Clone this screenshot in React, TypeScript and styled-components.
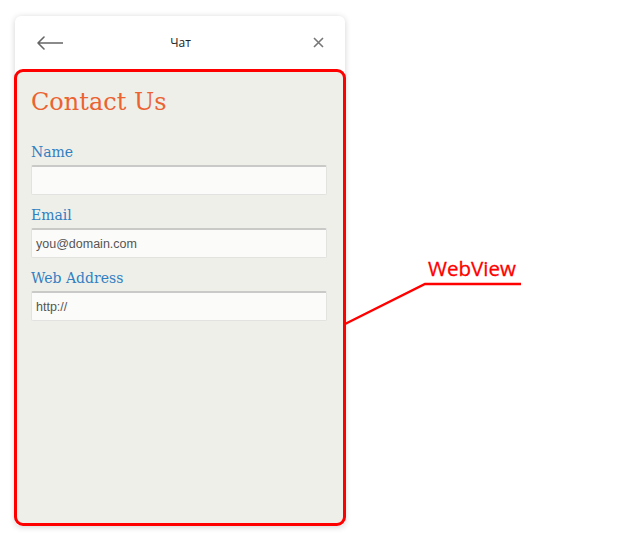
import React from "react";
import styled, { createGlobalStyle } from "styled-components";

const GlobalStyle = createGlobalStyle`
	html, body {
		margin: 0;
		padding: 0;
		background: #ffffff;
	}
`;

const Page = styled.div`
	position: relative;
	width: 640px;
	height: 540px;
	padding: 16px 0 0 15px;
	box-sizing: border-box;
`;

const Widget = styled.div`
	display: flex;
	flex-direction: column;
	width: 330px;
	height: 510px;
	background-color: #ffffff;
	border-radius: 6px;
	box-shadow: 0 1px 6px rgba(0, 0, 0, 0.18);
`;

const Header = styled.div`
	display: grid;
	grid-template-columns: 1fr auto 1fr;
	align-items: center;
	height: 53px;
	padding: 0 21px 0 22px;
	flex-shrink: 0;
`;

const HeaderTitle = styled.span`
	font-family: "Open Sans", "Noto Sans", sans-serif;
	font-size: 12px;
	color: #222222;
`;

const IconButton = styled.button<{ $end?: boolean }>`
	display: flex;
	align-items: center;
	justify-self: ${({ $end }) => ($end ? "end" : "start")};
	padding: 0;
	border: none;
	background: transparent;
`;

const WebViewFrame = styled.div`
	flex: 1;
	margin: 0 -1px;
	padding: 16px 16px 0 14px;
	border: 3px solid #ff0000;
	border-radius: 9px;
	background-color: #efefea;
`;

const Title = styled.h1`
	margin: 0 0 28px;
	font-family: "DejaVu Serif", serif;
	font-size: 24px;
	font-weight: 400;
	line-height: 28px;
	color: #ea6331;
`;

const Field = styled.div`
	display: flex;
	flex-direction: column;
	gap: 4px;
	margin-bottom: 12px;
`;

const Label = styled.label`
	font-family: "DejaVu Serif", serif;
	font-size: 14px;
	line-height: 17px;
	color: #2f80c2;
`;

const TextInput = styled.input`
	width: 100%;
	height: 30px;
	box-sizing: border-box;
	padding: 0 4px;
	border: 1px solid #e2e2e0;
	border-top: 2px solid #c9c9c7;
	border-radius: 2px;
	background-color: #fbfbf9;
	font-family: "Liberation Sans", Arial, sans-serif;
	font-size: 12.5px;
	color: #555555;
	outline: none;
`;

const Callout = styled.svg`
	position: absolute;
	left: 0;
	top: 0;
	pointer-events: none;
`;

const CalloutLabel = styled.span`
	position: absolute;
	left: 428px;
	top: 254px;
	font-family: "Open Sans", "Noto Sans", sans-serif;
	font-size: 20.5px;
	font-weight: 400;
	line-height: 28px;
	color: #ff0000;
	-webkit-text-stroke: 0.3px #ff0000;
`;

const fields = [
	{ label: "Name", value: "" },
	{ label: "Email", value: "you@domain.com" },
	{ label: "Web Address", value: "http://" },
];

export default function App() {
	return (
		<Page>
			<GlobalStyle />
			<Widget>
				<Header>
					<IconButton aria-label="back">
						<svg width="26" height="14" viewBox="0 0 26 14" fill="none">
							<path
								d="M25.5 7H1M7 1L1 7l6 6"
								stroke="#666"
								strokeWidth="1.6"
								strokeLinecap="round"
								strokeLinejoin="round"
							/>
						</svg>
					</IconButton>
					<HeaderTitle>Чат</HeaderTitle>
					<IconButton $end aria-label="close">
						<svg width="11" height="11" viewBox="0 0 11 11" fill="none">
							<path d="M1 1l9 9M10 1l-9 9" stroke="#777" strokeWidth="1.6" />
						</svg>
					</IconButton>
				</Header>
				<WebViewFrame>
					<Title>Contact Us</Title>
					{fields.map((f) => (
						<Field key={f.label}>
							<Label>{f.label}</Label>
							<TextInput defaultValue={f.value} />
						</Field>
					))}
				</WebViewFrame>
			</Widget>
			<Callout width="640" height="540" viewBox="0 0 640 540">
				<path d="M345 324L425 284H521" stroke="#ff0000" strokeWidth="2.5" fill="none" />
			</Callout>
			<CalloutLabel>WebView</CalloutLabel>
		</Page>
	);
}
